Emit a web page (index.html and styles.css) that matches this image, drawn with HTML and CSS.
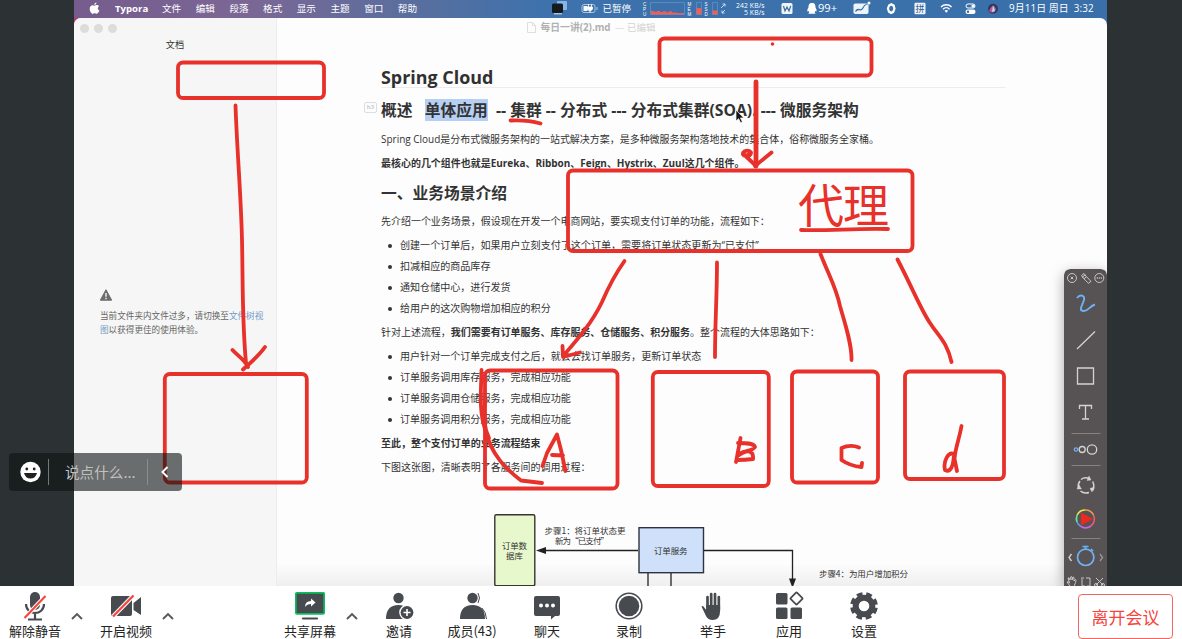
FILE: index.html
```html
<!DOCTYPE html>
<html lang="zh-CN">
<head>
<meta charset="utf-8">
<title>会议</title>
<link rel="stylesheet" href="styles.css">
</head>
<body>
<main class="stage">
  <div class="desktop">
    <header class="menubar">
      <svg class="apple" width="11" height="13" viewBox="0 0 11 13"><path d="M7.4 0.6C7.5 2 6.400 3 5.300 3C5.200 1.800 6.300 0.700 7.400 0.600ZM5.500 3.700C6.200 3.700 7 3 8 3.100C8.900 3.200 9.600 3.600 10 4.200C8.200 5.300 8.500 7.900 10.400 8.600C9.900 10 8.900 11.700 7.800 11.700C7 11.700 6.600 11.200 5.700 11.200C4.800 11.200 4.400 11.700 3.600 11.700C2.400 11.700 0.700 9.200 0.700 6.700C0.700 4.400 2.100 3.200 3.500 3.200C4.400 3.200 5 3.700 5.500 3.700Z" fill="#fff"/></svg>
      <nav class="menus"><b>Typora</b><span>文件</span><span>编辑</span><span>段落</span><span>格式</span><span>显示</span><span>主题</span><span>窗口</span><span>帮助</span></nav>
      <svg class="status" width="454" height="17" viewBox="548 0 454 17">
        <rect x="557" y="1" width="10" height="9" rx="1" fill="#86b6e6"/><rect x="552" y="3.500" width="11" height="9.500" rx="1.500" fill="#171a1d"/><path d="M554 13.800h8" stroke="#dfe7ef"/>
        <rect x="582" y="4.500" width="13" height="8" rx="2" fill="none" stroke="#a8c4df"/><rect x="583.500" y="6" width="4" height="5" fill="#fff"/><path d="M597 7v3" stroke="#a8c4df"/><path d="M588.500 4v3M591.500 4v3M587.500 7h5v2q-2.500 4-5 0zM590 10v3" stroke="#fff" fill="#fff" stroke-width=".8"/>
        <text x="602.500" y="12.200" font-size="9.500">已暂停</text>
        <g class="meter" font-size="4.600"><text x="643" y="5.500">C</text><text x="643" y="10.500">P</text><text x="643" y="15.500">U</text><text x="687.500" y="5.500">M</text><text x="687.500" y="10.500">E</text><text x="687.500" y="15.500">M</text><text x="704.500" y="5.500">S</text><text x="704.500" y="10.500">S</text><text x="704.500" y="15.500">D</text></g>
        <path d="M650.500 2.500h34v12h-34zM696.500 2.500h5v12h-5zM712.500 2.500h5v12h-5z" fill="none" stroke="#5d92c6" stroke-width=".8"/>
        <path d="M651 14.500v-3.500h3v.8h3v-.8h3v1h3v-.8h3v1h3v-1h3v1.300h5v.5h7v1.500zM696.500 14.500V8h5v6.500zM712.500 14.500v-4h5v4z" fill="#ee5f5c"/>
        <path d="M721 8l4-4m-2.500 0H725v2.500M725 10l-3 3m0-2.500V13h2.500" fill="none" stroke="#d6e5f4" stroke-width=".9"/>
        <text x="736" y="7.800" font-size="6.800" textLength="28.500">242 KB/s</text><text x="744" y="14.500" font-size="6.800" textLength="20.500">5 KB/s</text>
        <rect x="781.500" y="3" width="11" height="11" rx="1.500" fill="#eef4f9"/><path d="M783.500 6l1.500 5 2-4 2 4 1.700-5" stroke="#3b6d9c" fill="none" stroke-width="1.200"/>
        <path d="M812 3c-3 0-3.500 2-3.500 4.500-1 1.500-1.500 3-1 4l1.200-.6.5 1.600-1 1.200h7.500l-1-1.200.6-1.600 1.200.6c.3-1.200-.2-2.500-1-4C815.500 5 815 3 812 3z" fill="#fff"/>
        <text x="818" y="12.200" font-size="10" textLength="19" lengthAdjust="spacingAndGlyphs">99+</text>
        <rect x="853.500" y="3.500" width="15" height="10.500" rx="1.800" fill="#edf3f8"/><path d="M855.500 11.500c3-5 5 1 7-3s3-4 6-5" stroke="#386fa6" fill="none" stroke-width="1.300"/><circle cx="869" cy="3" r="1.500" fill="#fff"/>
        <path d="M891.200 3l3.400 1.700 1 4-1.500 4-3 1.500-3-1.700-1.300-4 1.400-3.800zM891.200 5.800c-2.700 0-2.700 5.600 0 5.600s2.700-5.600 0-5.600z" fill="#fff" fill-rule="evenodd"/>
        <rect x="914.500" y="2.800" width="11" height="11.500" rx="1" fill="#eef4f9"/><text class="ink" x="915.500" y="12" font-size="9">拼</text>
        <path d="M941 7a7.500 7.500 0 0110.600 0M943 9.200a4.700 4.700 0 016.600 0" fill="none" stroke="#fff" stroke-width="1.500"/><path d="M944.500 10.800l1.800 2 1.800-2q-1.800-1.400-3.600 0z" fill="#fff"/>
        <rect x="966" y="4" width="9" height="4" rx="2" fill="none" stroke="#fff"/><circle cx="973" cy="6" r="1.600" fill="#fff"/><rect x="965.500" y="9.500" width="10" height="4.500" rx="2.200" fill="#fff"/><circle cx="968" cy="11.700" r="1.200" fill="#3a70aa"/>
        <circle cx="993" cy="8.700" r="5" fill="#343760"/><path d="M989 11q4-9 7-2-2 6-7 2z" fill="#c45993"/><path d="M992 12l1-7 2 6z" fill="#b9def2"/>
      </svg>
      <time class="clock">9月11日 周日&ensp;3:32</time>
    </header>
    <div class="window">
      <aside class="sidebar">
        <div class="lights"><i></i><i></i><i></i></div>
        <div class="side-title">文档</div>
        <div class="side-note">
          <svg width="12" height="12" viewBox="0 0 12 12"><path d="M6 .7L11.700 11.200H.3z" fill="#6c6c6c" stroke="#6c6c6c" stroke-linejoin="round"/><path d="M6 4v3.800M6 8.800v1.400" stroke="#fff" stroke-width="1.300"/></svg>
          <p>当前文件夹内文件过多，请切换至<a>文件树视图</a>以获得更佳的使用体验。</p>
        </div>
      </aside>
      <section class="editor">
        <div class="doc-title"><svg width="9" height="11" viewBox="0 0 9 11"><path d="M.5.5h5l3 3v7h-8zM5.500.5v3h3" fill="none" stroke="#dedede"/></svg><b>每日一讲(2).md</b><span>— 已编辑</span></div>
        <article class="doc">
          <h1>Spring Cloud</h1>
          <h3 class="first"><em class="tag">h3</em>概述&nbsp;&nbsp; <mark>单体应用</mark>&nbsp; -- 集群 -- 分布式 --- 分布式集群(SOA).&nbsp;--- 微服务架构</h3>
          <p>Spring Cloud是分布式微服务架构的一站式解决方案，是多种微服务架构落地技术的集合体，俗称微服务全家桶。</p>
          <p><b>最核心的几个组件也就是Eureka、Ribbon、Feign、Hystrix、Zuul这几个组件。</b></p>
          <h3>一、业务场景介绍</h3>
          <p>先介绍一个业务场景，假设现在开发一个电商网站，要实现支付订单的功能，流程如下：</p>
          <ul>
            <li>创建一个订单后，如果用户立刻支付了这个订单，需要将订单状态更新为“已支付”</li>
            <li>扣减相应的商品库存</li>
            <li>通知仓储中心，进行发货</li>
            <li>给用户的这次购物增加相应的积分</li>
          </ul>
          <p>针对上述流程，<b>我们需要有订单服务、库存服务、仓储服务、积分服务</b>。整个流程的大体思路如下：</p>
          <ul>
            <li>用户针对一个订单完成支付之后，就会去找订单服务，更新订单状态</li>
            <li>订单服务调用库存服务，完成相应功能</li>
            <li>订单服务调用仓储服务，完成相应功能</li>
            <li>订单服务调用积分服务，完成相应功能</li>
          </ul>
          <p><b>至此，整个支付订单的业务流程结束</b></p>
          <p>下图这张图，清晰表明了各服务间的调用过程：</p>
          <svg class="figure" width="624" height="106" viewBox="381 480 624 106">
            <rect x="494.800" y="514.800" width="40" height="71" rx="1.500" fill="#e7f8cd" stroke="#34362f" stroke-width="1.400"/>
            <rect x="639" y="527.700" width="64.500" height="45" fill="#cfe0fa" stroke="#2d3440" stroke-width="1.400"/>
            <path d="M638 550.500H544M704 550.500h88.500V580M648 573v13M671 573v13" fill="none" stroke="#222" stroke-width="1.300"/>
            <path d="M536 550.500l10-3.500v7zM792.500 588l-3.500-9.500h7z" fill="#222"/>
            <g font-size="8.500" fill="#333"><text x="502" y="549" textLength="25">订单数</text><text x="506" y="559" textLength="17">据库</text><text x="654" y="553.700" textLength="33.500">订单服务</text><text x="544.500" y="533.700" textLength="81">步骤1：将订单状态更</text><text x="555" y="544.200" textLength="54">新为“已支付”</text><text x="819" y="576.500" textLength="89">步骤4：为用户增加积分</text></g>
          </svg>
        </article>
      </section>
    </div>
  </div>

  <svg class="ink-layer" width="1182" height="586" viewBox="0 0 1182 586">
    <g fill="none" stroke="#e7312a" stroke-width="3.800" stroke-linecap="round" stroke-linejoin="round">
      <rect x="178" y="62.500" width="146" height="35.500" rx="5"/>
      <rect x="659.500" y="38.500" width="212" height="37" rx="5"/>
      <rect x="568" y="170.500" width="344.500" height="80.500" rx="5"/>
      <rect x="164.800" y="374" width="142" height="108.500" rx="5"/>
      <rect x="485" y="370.500" width="132.500" height="118" rx="5"/>
      <rect x="652.800" y="372" width="116" height="114" rx="5"/>
      <rect x="792" y="371.500" width="86" height="111" rx="5"/>
      <rect x="905" y="371.500" width="99" height="107.500" rx="5"/>
      <path d="M235.500 105.500C237 150 241 195 242 240S242 320 246 363M232.500 350C238 356 244 359 248 367M243 369.500C250 363 258 357 265 347"/>
      <path d="M756 82V166" stroke-width="4.800"/>
      <path d="M755 166L771.500 152.500M754 164L744 154.500C746 157 751 156 751 152.500 749 149 742 151 743 154.500Q745 157 749 154"/>
      <path d="M510.500 120.500C521 120 532 121 540.500 123.500M801 230C830 231 855 228 888 229"/>
      <path d="M624.500 261C616 273 608 288 602 302C592 323 577 340 564 355M562.500 346L563 357 580 352.500"/>
      <path d="M717 262.500C717 295 715 323 715 357M820.500 254C830 278 836 287 840 306C845 324 852 344 851.500 360M897.500 259.500C912 287 921 310 930 323C939 337 947 342 951.500 362"/>
      <path d="M481.500 370C481 392 479 411 485 429C491 455 507 470 521 480.500L542 483"/>
      <path d="M485 400C483 415 484 428 489 438"/>
      <path d="M542.500 466L547 453 557 434.500 561 450 565.500 471M552 455L563 455.500M740.500 438L736 462M738 443C746 443 754 443 755 447 753 451 745 450 739 455M739 454C748 449 754 451 753 459Q745 460 737 460M859 447.500C853 445 846 446 841.500 448L841.500 460Q850 466 861.500 467L862 463M961.500 426C959 440 955 449 954.500 459L957 471M954 454C948 451 943 462 945 470Q953 474 954 454"/>
    </g>
    <circle cx="772.500" cy="44" r="1.800" fill="#e7312a"/>
    <text class="big-note" x="798" y="222" textLength="91">代理</text>
    <path d="M736 110v11l2.600-2.300 2 4 1.800-.9-2-3.800h3.400z" fill="#151515" stroke="#fff" stroke-width=".7"/>
  </svg>

  <svg class="palette" width="43" height="317" viewBox="1064 269 43 317">
    <path d="M1064 586V275q0-6 6-6h31q6 0 6 6v311z" fill="#575354"/>
    <g fill="none" stroke="#d4d2d2" stroke-width="1.300">
      <g stroke-width=".9"><circle cx="1072" cy="278" r="4.500"/><path d="M1070.700 276.700l2.600 2.600m0-2.600l-2.600 2.600M1081.500 275.500l2.500-2 2.500 3.300-2.500 2zM1084 278.800l4.500 4.500 2.500-2-4.500-4.500M1082 277.500l3.200-2.600"/><circle cx="1099.300" cy="278" r="4.500"/></g>
      <path d="M1096.800 278h5" stroke-dasharray="1 1"/>
      <path d="M1077 298C1080 294 1085 295 1084 300C1082 306 1078 311 1084 311C1088 311 1090 306 1095 304.500" stroke="#6eb2f6" stroke-width="1.900"/>
      <path d="M1077 349l18-17.500M1077.500 368h16v16h-16zM1079.500 409v-3.500h12v3.500M1085.500 405.500v13.500M1082 419h7"/>
      <path d="M1071.500 433.500h29M1071.500 465.500h29M1071.500 538.500h29" stroke="#858182" stroke-width="1"/>
      <circle cx="1076" cy="449.500" r="1.700" stroke="#6eb2f6"/><circle cx="1082.200" cy="449.500" r="3"/><circle cx="1092" cy="449.500" r="4.700"/>
      <path d="M1081 479.500q4-3 9-.5M1092.700 481.500q2.300 5 0 9M1089 492.500q-5 1.500-8.500-1.500M1078.500 488q-1-4 1.500-7" stroke-width="1.500"/><path d="M1089 476l2 4-4 .5zM1094 487l-2 5-2-3.500zM1077 489l2-4 2.500 4z" fill="#d4d2d2" stroke-width=".4"/>
      <path d="M1071.500 554l-2.500 3.500 2.500 3.500"/><path d="M1100 554l2.500 3.500-2.500 3.500" stroke="#999596"/>
      <g stroke="#6eb2f6" stroke-width="1.700"><circle cx="1085.700" cy="557.300" r="8.200"/><path d="M1082.500 546.500h6M1085.500 546.500v3M1091 549l2 2"/></g>
      <path d="M1070 586l-3-4q1-1 2.500 1l-1.500-5q1-1 2 2l.5-3q1-1 1.500 0v3l1-3q1 0 1 1v3l1.500-1.500q1 0 0 3l-1.500 4M1081 578h3m2 0h4v8h-3m-2 0h-3v-7M1096 578l7 7M1103 578l-7 7" stroke-width=".9"/><circle cx="1096" cy="585" r="1.500" stroke-width=".9"/><circle cx="1103" cy="585" r="1.500" stroke-width=".9"/>
    </g>
    <g fill="none" stroke-width="1.600"><path d="M1077.200 515A9 9 0 011085.500 510" stroke="#e8e554"/><path d="M1085.500 510A9 9 0 011093.500 515" stroke="#f09b50"/><path d="M1093.500 515A9 9 0 011091 526" stroke="#ee5b72"/><path d="M1091 526A9 9 0 011081 526.500" stroke="#c464df"/><path d="M1081 526.500A9 9 0 011077 522" stroke="#599df0"/><path d="M1077 522A9 9 0 011077.200 515" stroke="#5fe6a0"/></g>
    <path d="M1081 512.500l12 6.500-12 6.500z" fill="#ea2a20"/>
  </svg>

  <div class="chat">
    <svg width="22" height="22" viewBox="0 0 22 22"><circle cx="10.500" cy="11" r="10.200" fill="#fff"/><circle cx="6.800" cy="8" r="1.400" fill="#222"/><circle cx="14.200" cy="8" r="1.400" fill="#222"/><path d="M4 12h13q-1.500 5.500-6.500 5.500T4 12z" fill="#222"/></svg>
    <span class="chat-input">说点什么...</span>
    <svg class="fold" width="8" height="12" viewBox="0 0 8 12"><path d="M6.500 1L1.500 6l5 5" fill="none" stroke="#fff" stroke-width="2"/></svg>
  </div>
</main>

<footer class="toolbar">
  <div class="tool w70"><svg viewBox="0 0 30 30"><rect x="10" y="1" width="10" height="18" rx="5" fill="#474b50"/><path d="M6 13c0 12 18 12 18 0M15 22v6M8 28.500h14" fill="none" stroke="#474b50" stroke-width="2.200"/><path d="M4.500 27L25.500 5" stroke="#fff" stroke-width="4"/><path d="M4.500 27L25.500 5" stroke="#f64843" stroke-width="2.200"/></svg><span>解除静音</span></div>
  <svg class="caret" viewBox="0 0 14 10"><path d="M2 8l5-5 5 5"/></svg>
  <div class="tool w70 ml7"><svg viewBox="0 0 30 30"><rect x="0" y="5" width="21" height="20" rx="2" fill="#474b50"/><path d="M22.500 12L30 6v18l-7.500-5z" fill="#474b50"/><path d="M2 25.500L22.500 4.500" stroke="#fff" stroke-width="4.500"/><path d="M2 25.500L22.500 4.500" stroke="#f64843" stroke-width="2.400"/></svg><span>开启视频</span></div>
  <svg class="caret" viewBox="0 0 14 10"><path d="M2 8l5-5 5 5"/></svg>
  <div class="tool w70 ml100"><svg viewBox="0 0 30 30"><rect x=".8" y="1.800" width="28.400" height="21" rx="1" fill="#474b50" stroke="#08bf5b" stroke-width="1.700"/><path d="M10 16q0-6 6-6V7.500l4.500 4L16 15.500V13q-4 0-6 3z" fill="#fff"/><path d="M8 27.500h14" stroke="#474b50" stroke-width="2.200" stroke-linecap="round"/></svg><span>共享屏幕</span></div>
  <svg class="caret" viewBox="0 0 14 10"><path d="M2 8l5-5 5 5"/></svg>
  <div class="tool w80"><svg viewBox="0 0 30 30"><g fill="#474b50"><circle cx="14.500" cy="7" r="5.200"/><path d="M2 28q0-14 12.500-14 11.500 0 13 14z"/><circle cx="23" cy="21.500" r="7.800" fill="#fff"/><circle cx="23" cy="21.500" r="6.400"/></g><path d="M23 18v7M19.500 21.500h7" stroke="#fff" stroke-width="1.600"/></svg><span>邀请</span></div>
  <div class="tool w66"><svg viewBox="0 0 30 30"><g fill="#474b50"><circle cx="15.500" cy="7" r="5.200"/><path d="M3 28q0-14 12.500-14T28 28z"/></g><path d="M21 2q3 5 0 10M25 17q4 4 4.500 11" fill="none" stroke="#474b50"/></svg><span>成员(43)</span></div>
  <div class="tool w84"><svg viewBox="0 0 30 30"><path d="M4 5h22q2 0 2 2v16q0 2-2 2h-3l-4 3.500V25H4q-2 0-2-2V7q0-2 2-2z" fill="#474b50"/><g fill="#fff"><circle cx="9" cy="14.500" r="2"/><circle cx="15" cy="14.500" r="2"/><circle cx="21" cy="14.500" r="2"/></g></svg><span>聊天</span></div>
  <div class="tool w80"><svg viewBox="0 0 30 30"><circle cx="15" cy="15" r="12.800" fill="none" stroke="#474b50" stroke-width="1.600"/><circle cx="15" cy="15" r="10.300" fill="#474b50"/></svg><span>录制</span></div>
  <div class="tool w88"><svg viewBox="0 0 30 30"><path d="M9.500 6v12M13.200 3v14M17 3v14M20.800 6v13" stroke="#474b50" stroke-width="2.700" stroke-linecap="round"/><path d="M8.200 14v5L5.500 15.500Q4.500 14.500 3.500 15.500L8 25q2 4 6.500 4 7.600 0 7.600-9v-6z" fill="#474b50"/></svg><span>举手</span></div>
  <div class="tool w64"><svg viewBox="0 0 30 30"><g fill="#474b50"><rect x="2" y="2" width="11.500" height="11.500" rx="1.500"/><rect x="2" y="16.500" width="11.500" height="11.500" rx="1.500"/><rect x="16.500" y="16.500" width="11.500" height="11.500" rx="1.500"/></g><rect x="18" y="3" width="9" height="9" rx="1" transform="rotate(45 22.500 7.500)" fill="none" stroke="#474b50" stroke-width="1.800"/></svg><span>应用</span></div>
  <div class="tool w86"><svg viewBox="0 0 30 30"><g fill="none" stroke="#474b50"><circle cx="15" cy="15" r="8.300" stroke-width="6"/><circle cx="15" cy="15" r="12.200" stroke-width="3.400" stroke-dasharray="5.800 3.782" stroke-dashoffset="-1.890"/></g></svg><span>设置</span></div>
  <button class="leave">离开会议</button>
</footer>
</body>
</html>
```

FILE: styles.css
```css
* { box-sizing: border-box; }
body { margin: 0; width: 1182px; height: 639px; overflow: hidden; background: #fff; font-family: "Open Sans", "Noto Sans CJK SC", sans-serif; color: #333; }
svg { flex: none; display: block; }
.stage { position: relative; height: 586px; padding: 0 75px 0 74px; background: #2c3133; overflow: hidden; }
.desktop { width: 1033px; height: 586px; background: linear-gradient(90deg, #b23a65 0, #704f84 25%, #3b71ac 45%); }
.menubar { display: flex; align-items: center; height: 18px; padding: 0 12px 1px 15px; color: #fff; font-size: 9.6px; line-height: 17px; background: linear-gradient(90deg, #755c8c 0, #7b6795 17%, #566f9f 34%, #3d72ad 46%, #3a70aa 100%); }
.menus { display: flex; gap: 14.500px; margin-left: 15px; width: 433px; white-space: nowrap; }
.menus b { width: 32.500px; }
.status { overflow: visible; }
.status text { fill: #fff; }
.status .meter { font-family: "Liberation Sans", sans-serif; }
.status .ink { fill: #315e90; }
.clock { margin-left: 7px; font-size: 9.900px; letter-spacing: .1px; white-space: nowrap; }
.window { display: flex; height: 568px; border-radius: 7px 7px 0 0; overflow: hidden; background: linear-gradient(180deg, #fdfdfd 0, #fdfdfd 545px, #efefef 568px); }
.sidebar { width: 203px; flex: none; background: #f6f6f6; border-right: 1px solid #ededed; }
.lights { display: flex; gap: 5px; padding: 5.500px 0 0 6px; }
.lights i { width: 9px; height: 9px; border-radius: 50%; background: #dcdcdc; }
.side-title { margin-top: 5px; text-align: center; font-size: 9.200px; line-height: 14px; }
.side-note { margin: 237px 10px 0 26px; font-size: 8.600px; line-height: 14px; color: #656565; }
.side-note p { margin: 8.500px 0 0; }
.side-note a { color: #7199c9; }
.editor { flex: 1; padding-left: 104px; }
.doc-title { display: flex; align-items: center; height: 18px; margin-left: 146px; gap: 4.500px; font-size: 9.800px; color: #b1b1b1; white-space: nowrap; }
.doc-title span { font-size: 9.500px; color: #d2d2d2; }
.doc { width: 624px; font-size: 9.970px; white-space: nowrap; }
.doc h1 { margin: 30px 0 0; height: 22px; border-bottom: 1px solid #ececec; font-size: 17.900px; line-height: 22px; color: #303030; }
.doc h3 { display: flow-root; margin: 0; height: 34px; line-height: 36px; font-size: 15.750px; color: #333; }
.doc .first { position: relative; height: 39px; line-height: 44px; }
.tag { position: absolute; left: -17px; top: 14px; width: 13px; height: 11px; border: 1px solid #ddd; border-radius: 2px; font-size: 6px; line-height: 8px; text-align: center; font-style: normal; color: #ccc; }
.doc mark { color: inherit; background: #b5d0f3; padding: 0; }
.doc p { margin: 0; line-height: 24px; height: 24px; }
.doc ul { list-style: none; margin: 2px 0 1px; padding: 0 0 0 19px; font-size: 10.050px; }
.doc li { display: flex; align-items: center; height: 21px; line-height: 21px; margin-left: -12.500px; gap: 8.500px; }
.doc li::before { content: ""; width: 4px; height: 4px; border-radius: 50%; background: #333; }
.figure { margin-top: 1px; font-family: "Noto Sans CJK SC", sans-serif; }
.ink-layer { position: absolute; left: 0; top: 0; }
.big-note { font: 46px "Noto Sans CJK SC", sans-serif; fill: #e7312a; }
.palette { position: absolute; left: 1064px; top: 269px; border-radius: 6px 6px 0 0; box-shadow: 0 4px 14px rgba(0, 0, 0, .35); clip-path: inset(-15px 0 0 -20px); }
.chat { position: absolute; left: 9px; top: 453px; width: 173px; height: 38px; display: flex; align-items: center; padding-left: 11px; border-radius: 4px; background: rgba(14, 18, 18, .6); }
.chat-input { width: 100px; height: 26px; margin-left: 6px; padding-left: 16px; border-left: 1px solid #747878; border-right: 1px solid #8b8e8e; font: 14.600px/25px "Noto Sans CJK SC", sans-serif; color: #bfc1c1; white-space: nowrap; }
.fold { margin-left: 13px; }
.toolbar { display: flex; align-items: flex-start; height: 53px; background: #fff; }
.tool { display: flex; flex-direction: column; align-items: center; flex: none; padding-top: 5px; font: 13px/19px "Noto Sans CJK SC", sans-serif; color: #232323; white-space: nowrap; }
.tool svg { width: 30px; height: 30px; }
.w64 { width: 64px; } .w66 { width: 66px; } .w70 { width: 70px; } .w80 { width: 80px; }
.w84 { width: 84px; } .w86 { width: 86px; } .w88 { width: 88px; }
.ml7 { margin-left: 7px; }
.ml100 { margin-left: 100px; }
.caret { width: 14px; height: 10px; margin-top: 24.500px; fill: none; stroke: #55585c; stroke-width: 1.900; }
.leave { width: 95px; height: 45px; margin: 8px 0 0 171px; padding: 0; border: 1px solid #f5655f; border-radius: 4px; background: #fff; color: #f5433e; font: 17px/43px "Noto Sans CJK SC", sans-serif; }
```
